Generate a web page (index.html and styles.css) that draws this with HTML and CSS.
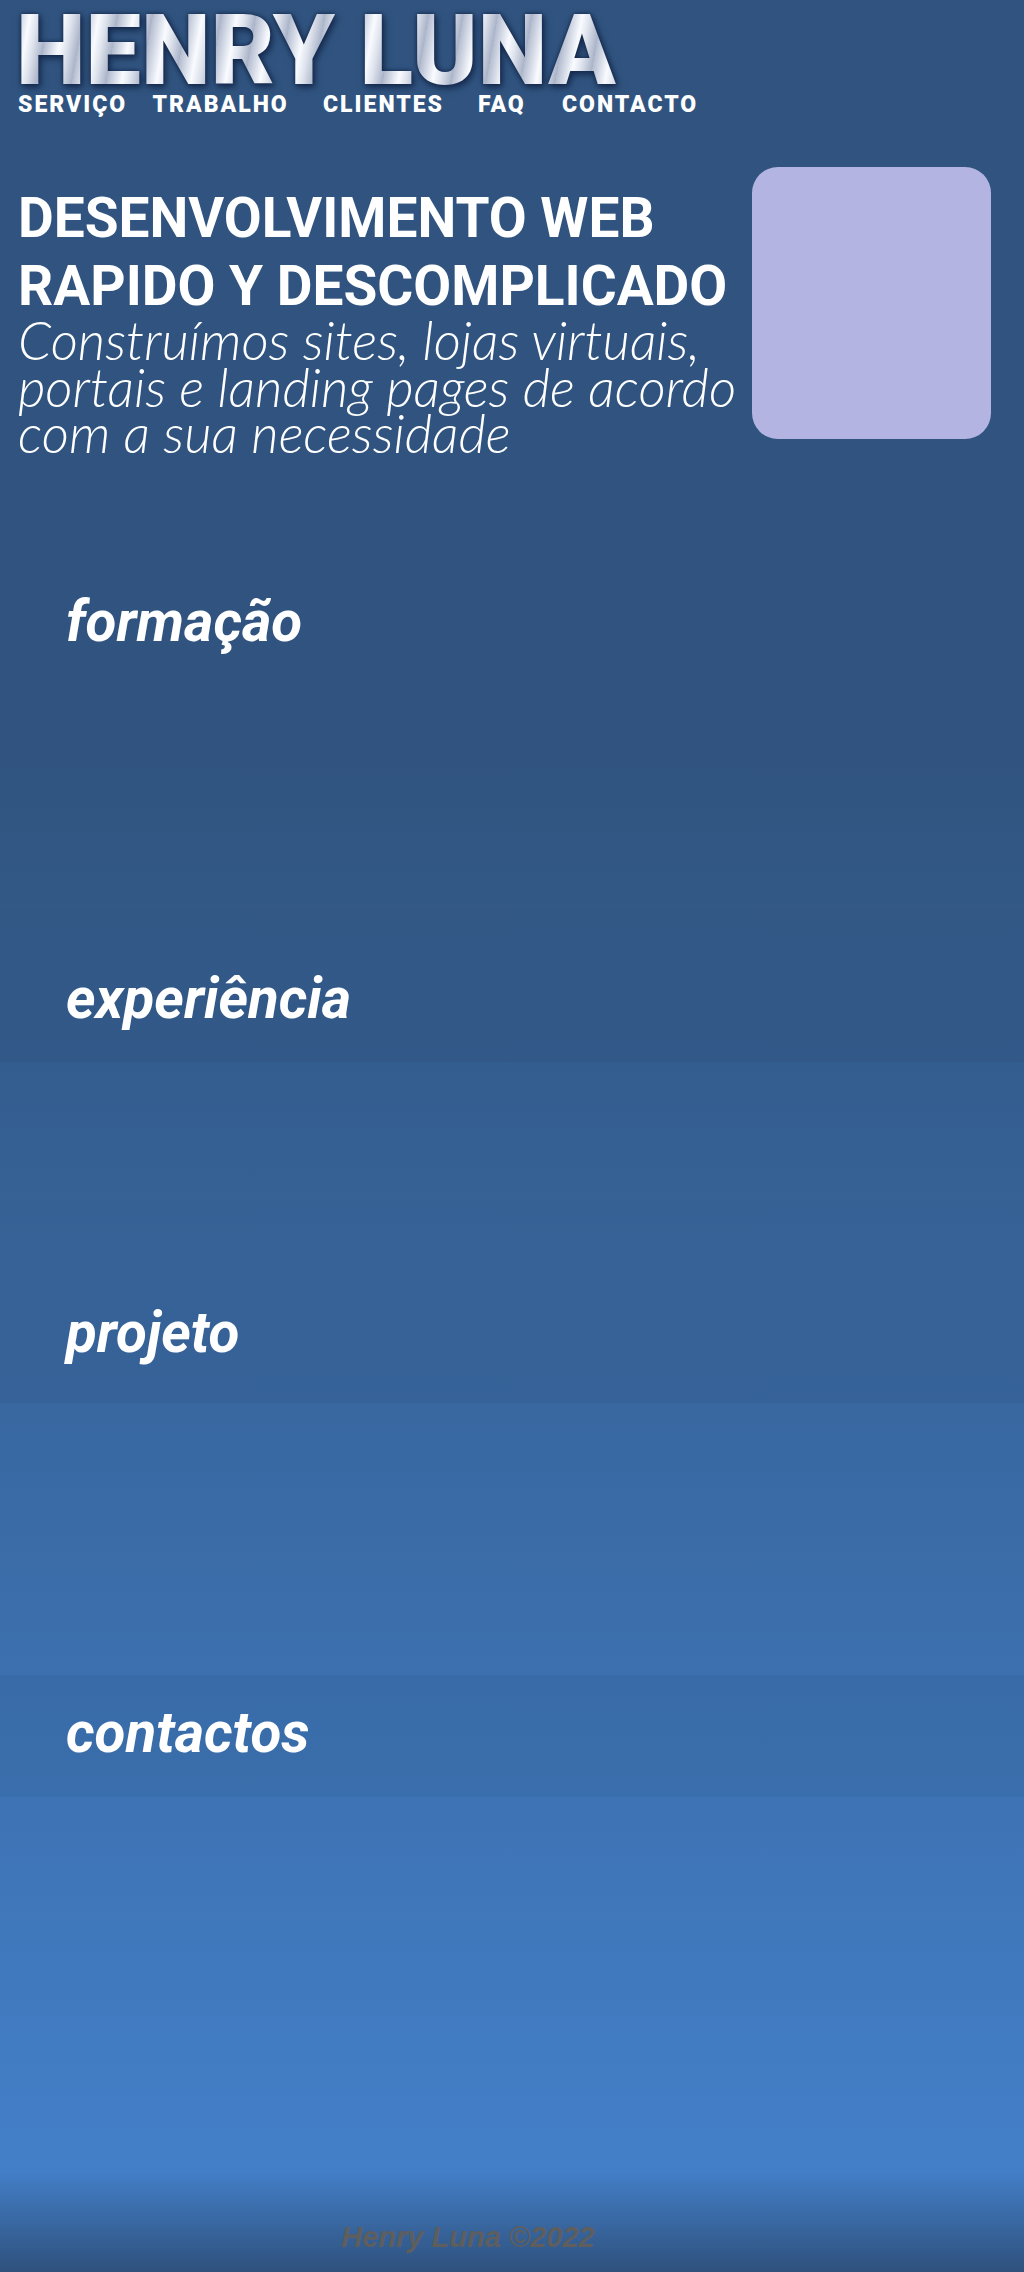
FILE: index.html
```html
<!DOCTYPE html>
<html lang="pt">
<head>
<meta charset="utf-8">
<title>Henry Luna</title>
<link rel="stylesheet" href="styles.css">
</head>
<body>
<header class="site-header">
  <h1 class="brand">HENRY LUNA</h1>
  <nav class="nav">
    <a class="nav-link" href="#servico">SERVIÇO</a>
    <a class="nav-link" href="#trabalho">TRABALHO</a>
    <a class="nav-link" href="#clientes">CLIENTES</a>
    <a class="nav-link" href="#faq">FAQ</a>
    <a class="nav-link" href="#contacto">CONTACTO</a>
  </nav>
</header>

<section class="hero">
  <div class="hero-text">
    <h2 class="hero-title">DESENVOLVIMENTO WEB<br>RAPIDO Y DESCOMPLICADO</h2>
    <p class="hero-sub">Construímos sites, lojas virtuais,<br>portais e landing pages de acordo<br>com a sua necessidade</p>
  </div>
  <div class="hero-image"></div>
</section>

<main>
  <section class="block block-formacao">
    <h2 class="block-title">formação</h2>
  </section>
  <section class="block block-experiencia block-fade">
    <h2 class="block-title">experiência</h2>
  </section>
  <section class="block block-projeto block-fade">
    <h2 class="block-title">projeto</h2>
  </section>
  <section class="block block-contactos">
    <h2 class="block-title block-band">contactos</h2>
  </section>
</main>

<footer class="site-footer">
  <p class="copyright">Henry Luna ©2022</p>
</footer>
</body>
</html>
```

FILE: styles.css
```css
html, body {
  margin: 0;
  padding: 0;
}

body {
  font-family: Roboto, "Liberation Sans", sans-serif;
  color: #ffffff;
  background: linear-gradient(to bottom,
    #30547f 0px,
    #30547f 760px,
    #437fc8 2170px,
    #2f517d 2272px);
  background-repeat: no-repeat;
}

/* Header */
.site-header {
  padding: 8px 14px 0 18px;
  box-sizing: border-box;
  height: 118px;
}

.brand {
  margin: 0 0 0 -2px;
  font-family: Roboto, sans-serif;
  font-weight: 900;
  font-size: 99px;
  line-height: 84px;
  display: inline-block;
  vertical-align: top;
  background: repeating-linear-gradient(100deg,
    #b3bccf 0px,
    #f9fbff 15px,
    #dde2ec 23px,
    #a9b3c8 34px);
  -webkit-background-clip: text;
  background-clip: text;
  color: transparent;
  filter: drop-shadow(0 0 2px rgba(20, 36, 72, 0.95)) drop-shadow(2px 3px 3px rgba(14, 30, 62, 0.7));
}

.nav {
  display: grid;
  grid-template-columns: 134.5px 170.5px 155px 84px auto;
  height: 26px;
  line-height: 26px;
}

.nav-link {
  color: #ffffff;
  text-decoration: none;
  font-weight: 900;
  font-size: 23px;
  letter-spacing: 2px;
  white-space: nowrap;
}

/* Hero */
.hero {
  display: flex;
  justify-content: space-between;
  align-items: flex-start;
  padding: 49px 33px 22px 18px;
  height: 291px;
}

.hero-text {
  padding-top: 17px;
}

.hero-title {
  margin: 0;
  font-weight: 700;
  font-size: 55px;
  line-height: 68px;
}

.hero-sub {
  margin: -3px 0 0 0;
  font-family: Lato, "Open Sans", sans-serif;
  font-weight: 300;
  font-style: italic;
  font-size: 53px;
  line-height: 46.5px;
  letter-spacing: 0;
}

.hero-image {
  width: 239px;
  height: 272px;
  border-radius: 26px;
  background: #b3b4e2;
  flex-shrink: 0;
}

/* Sections */
.block {
  box-sizing: border-box;
  padding-left: 66px;
}

.block-title {
  margin: 0;
  font-weight: 700;
  font-style: italic;
  font-size: 56.5px;
  line-height: 64px;
  height: 64px;
}

.block-formacao {
  height: 320px;
  padding-top: 110px;
}

.block-experiencia {
  height: 262px;
  padding-top: 167px;
}

.block-projeto {
  height: 341px;
  padding-top: 239px;
}

.block-fade {
  background: linear-gradient(to bottom,
    rgba(0, 0, 0, 0) 35%,
    rgba(6, 12, 30, 0.06) 100%);
}

.block-contactos {
  height: 394px;
  padding-top: 272px;
  padding-left: 0;
}

.block-band {
  box-sizing: content-box;
  padding: 26px 0 32px 66px;
  background: rgba(4, 10, 30, 0.05);
}

/* Footer */
.site-footer {
  height: 475px;
  box-sizing: border-box;
  padding: 425px 88px 0 0;
}

.copyright {
  margin: 0;
  text-align: center;
  font-family: "Liberation Sans", Arial, sans-serif;
  font-weight: 700;
  font-style: italic;
  font-size: 29px;
  line-height: 30px;
  color: #5e5e5e;
}
```
